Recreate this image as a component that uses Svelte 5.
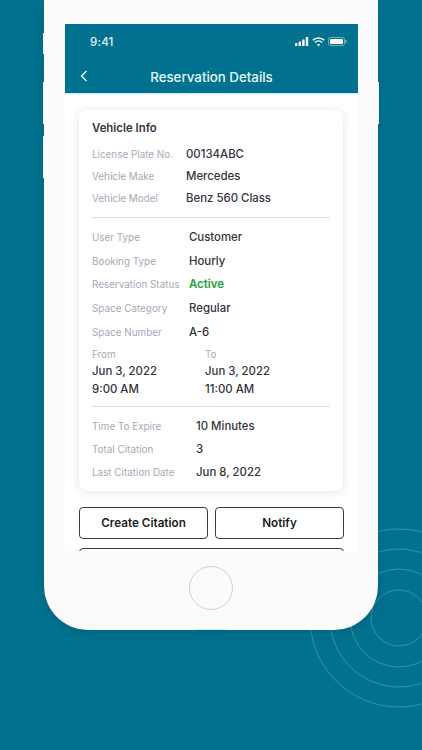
<script>
  const vehicle = [
    ['License Plate No.', '00134ABC'],
    ['Vehicle Make', 'Mercedes'],
    ['Vehicle Model', 'Benz 560 Class']
  ];
  const booking = [
    ['User Type', 'Customer', ''],
    ['Booking Type', 'Hourly', ''],
    ['Reservation Status', 'Active', 'active'],
    ['Space Category', 'Regular', ''],
    ['Space Number', 'A-6', '']
  ];
  const citation = [
    ['Time To Expire', '10 Minutes'],
    ['Total Citation', '3'],
    ['Last Citation Date', 'Jun 8, 2022']
  ];
</script>

<div class="page">
  <svg class="rings" width="180" height="180" viewBox="0 0 180 180" aria-hidden="true">
    <circle cx="90" cy="90" r="28" />
    <circle cx="90" cy="90" r="49" />
    <circle cx="90" cy="90" r="69" />
    <circle cx="90" cy="90" r="89" />
  </svg>

  <div class="phone">
    <span class="side s1"></span>
    <span class="side s2"></span>
    <span class="side s3"></span>
    <span class="side s4"></span>
    <span class="bump"></span>

    <div class="screen">
      <header class="appbar">
        <div class="status">
          <span class="time">9:41</span>
          <div class="status-icons">
            <svg width="14" height="9" viewBox="0 0 14 9" fill="#fff">
              <rect x="0" y="6" width="2.4" height="3" rx=".5" />
              <rect x="3.6" y="4.4" width="2.4" height="4.6" rx=".5" />
              <rect x="7.2" y="2.4" width="2.4" height="6.6" rx=".5" />
              <rect x="10.8" y="0" width="2.4" height="9" rx=".5" />
            </svg>
            <svg width="13" height="10" viewBox="0 0 13 10" fill="none" stroke="#fff" stroke-width="1.4">
              <path d="M.8 3.3a8.2 8.2 0 0 1 11.4 0" />
              <path d="M2.9 5.4a5.2 5.2 0 0 1 7.2 0" />
              <path d="M6.5 9.4 4.9 7.6a2.3 2.3 0 0 1 3.2 0z" fill="#fff" stroke="none" />
            </svg>
            <svg width="19" height="9" viewBox="0 0 19 9">
              <rect x=".5" y=".5" width="16" height="8" rx="2.2" fill="none" stroke="#fff" stroke-opacity=".45" />
              <rect x="2" y="2" width="13" height="5" rx="1.2" fill="#fff" />
              <rect x="17.4" y="3" width="1.2" height="3" rx=".6" fill="#fff" fill-opacity=".5" />
            </svg>
          </div>
        </div>
        <div class="nav">
          <svg class="back" width="8" height="12" viewBox="0 0 8 12" fill="none" stroke="#fff" stroke-width="1.2">
            <path d="M6.5 1 1.5 6l5 5" />
          </svg>
          <h1>Reservation Details</h1>
        </div>
      </header>

      <div class="content">
        <section class="card">
          <h2>Vehicle Info</h2>
          <div class="group vehicle">
            {#each vehicle as [label, value]}
              <div class="row"><span class="label">{label}</span><span class="value">{value}</span></div>
            {/each}
          </div>
          <hr />
          <div class="group booking">
            {#each booking as [label, value, kind]}
              <div class="row"><span class="label">{label}</span><span class="value {kind}">{value}</span></div>
            {/each}
          </div>
          <div class="dates">
            <div class="date">
              <span class="label">From</span>
              <span class="value">Jun 3, 2022</span>
              <span class="value">9:00 AM</span>
            </div>
            <div class="date">
              <span class="label">To</span>
              <span class="value">Jun 3, 2022</span>
              <span class="value">11:00 AM</span>
            </div>
          </div>
          <hr class="second" />
          <div class="group citation">
            {#each citation as [label, value]}
              <div class="row"><span class="label">{label}</span><span class="value">{value}</span></div>
            {/each}
          </div>
        </section>

        <div class="actions">
          <button>Create Citation</button>
          <button>Notify</button>
          <button class="wide" aria-label="More actions"></button>
        </div>
      </div>
    </div>

    <div class="home-area"><span class="home"></span></div>
  </div>
</div>

<style>
  :global(body) {
    margin: 0;
    background: #00728f;
  }
  .page {
    position: relative;
    width: 422px;
    height: 750px;
    overflow: hidden;
    background: #00728f;
    padding-left: 44px;
    box-sizing: border-box;
    font-family: Inter, "Noto Sans", sans-serif;
  }
  .rings {
    position: absolute;
    left: 309px;
    top: 528px;
  }
  .rings circle {
    fill: none;
    stroke: rgba(255, 255, 255, 0.22);
    stroke-width: 1;
  }
  .phone {
    position: relative;
    width: 334px;
    height: 630px;
    box-sizing: border-box;
    padding: 24px 20px 0 21px;
    background: #fbfbfc;
    border-radius: 0 0 44px 44px;
    box-shadow: 0 3px 10px rgba(0, 40, 55, 0.18);
  }
  .side {
    position: absolute;
    width: 2px;
    background: #fbfbfc;
  }
  .s1 { left: -1px; top: 33px; height: 21px; }
  .s2 { left: -1px; top: 82px; height: 42px; }
  .s3 { left: -1px; top: 136px; height: 42px; }
  .s4 { right: -1px; top: 82px; height: 42px; }
  .bump {
    position: absolute;
    left: 152px;
    bottom: 0;
    width: 30px;
    height: 1px;
    background: #dfe6e8;
  }
  .screen {
    height: 527px;
    overflow: hidden;
    background: #fff;
  }
  .appbar {
    height: 69px;
    background: #00728f;
    border-bottom: 1px solid #c4ecf3;
    color: #fff;
  }
  .status {
    display: flex;
    justify-content: space-between;
    align-items: center;
    height: 36px;
    padding: 0 11px 0 25px;
  }
  .time {
    font-size: 11.5px;
    font-weight: 500;
    color: #e6f3f6;
    letter-spacing: 0.2px;
  }
  .status-icons {
    display: flex;
    align-items: center;
    gap: 3px;
    margin-bottom: 1px;
  }
  .nav {
    position: relative;
    display: flex;
    justify-content: center;
    align-items: center;
    height: 33px;
  }
  .back {
    position: absolute;
    left: 15px;
    top: 10px;
  }
  h1 {
    margin: 0;
    font-size: 13.3px;
    font-weight: 500;
    color: #e9f5f7;
  }
  .content {
    padding: 16px 15px 0 14px;
  }
  .card {
    height: 381px;
    box-sizing: border-box;
    padding: 10px 13px 0;
    background: #fff;
    border-radius: 8px;
    box-shadow: 0 1px 9px rgba(40, 50, 70, 0.14);
  }
  h2 {
    margin: 0 0 6px;
    height: 17px;
    line-height: 17px;
    font-size: 11.4px;
    font-weight: 600;
    color: #34343c;
  }
  .row {
    display: flex;
    align-items: center;
  }
  .label {
    font-size: 9.9px;
    color: #a8a8b6;
    white-space: nowrap;
  }
  .value {
    font-size: 11.4px;
    font-weight: 500;
    color: #34343c;
    white-space: nowrap;
  }
  .active {
    color: #27a03c;
    font-weight: 600;
  }
  .row .label { flex: none; }
  .vehicle .row { height: 22px; }
  .vehicle .label { width: 94px; }
  .booking .row { height: 23.75px; }
  .booking .label { width: 97px; }
  .citation .row { height: 23px; }
  .citation .label { width: 104px; }
  hr {
    margin: 8px 0 7px;
    border: 0;
    border-top: 1px solid #dcdcdf;
  }
  hr.second {
    margin: 8px 0 8px;
  }
  .dates {
    display: grid;
    grid-template-columns: 113px 1fr;
    margin-top: 2px;
  }
  .date {
    display: flex;
    flex-direction: column;
  }
  .date .label {
    line-height: 16px;
  }
  .date .value {
    line-height: 18px;
  }
  .actions {
    display: grid;
    grid-template-columns: 129px 129px;
    gap: 9px 7px;
    margin-top: 16px;
  }
  button {
    height: 32px;
    padding: 0;
    background: #fff;
    border: 1px solid #3c3c40;
    border-radius: 4px;
    font: 600 11.7px Inter, "Noto Sans", sans-serif;
    color: #1c1c20;
  }
  .wide {
    grid-column: 1 / -1;
  }
  .home-area {
    display: flex;
    justify-content: center;
    padding: 15px 1px 0 0;
  }
  .home {
    width: 42px;
    height: 42px;
    border: 1px solid #d2d2d2;
    border-radius: 50%;
  }
</style>
